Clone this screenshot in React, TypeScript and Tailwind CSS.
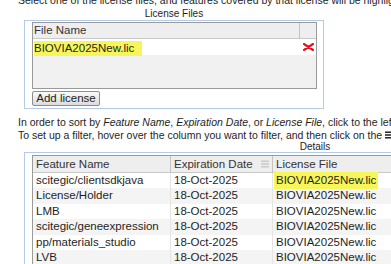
import React from "react";

const rows = [
  "scitegic/clientsdkjava",
  "License/Holder",
  "LMB",
  "scitegic/geneexpression",
  "pp/materials_studio",
  "LVB",
];

function MenuIcon({ className }: { className?: string }) {
  return (
    <svg width="8" height="8" viewBox="0 0 8 8" className={className}>
      <rect x="0" y="0.5" width="8" height="1.4" fill="currentColor" />
      <rect x="0" y="3.3" width="8" height="1.4" fill="currentColor" />
      <rect x="0" y="6.1" width="8" height="1.4" fill="currentColor" />
    </svg>
  );
}

export default function App() {
  return (
    <div className="w-[391px] h-[264px] overflow-hidden bg-white text-[#1e1e1e] font-['Liberation_Sans',Arial,sans-serif]">
      {/* Top instructions (clipped) */}
      <div className="-mt-[6px] pl-[18px] whitespace-nowrap text-[10.5px] leading-[13px]">
        Select one of the license files, and features covered by that license will be highlighted
      </div>
      <div className="ml-[24px] w-[300px] text-center text-[10px] leading-[12px] mt-[1px]">License Files</div>

      {/* License files panel */}
      <div className="ml-[24px] w-[300px] h-[89px] border border-[#b3cbe6] bg-white pl-[7px] pt-[1px]">
        <div className="w-[285px] h-[67px] border border-[#9a9a9a] bg-[#f1f1f1] flex flex-col">
          <div className="h-[16px] flex bg-[#eeeeee] border-b border-[#c9c9c9] text-[11.5px] leading-[15px]">
            <div className="w-[267px] pl-[1px] border-r border-[#c4c4c4] text-[#333]">File Name</div>
            <div className="flex-1" />
          </div>
          <div className="h-[16px] flex items-center bg-white">
            <div className="w-[267px] pl-[1px]">
              <span className="bg-[#f6f65a] text-[11.5px] leading-[15px] pr-[8px] inline-block">BIOVIA2025New.lic</span>
            </div>
            <div className="flex-1 flex items-center justify-center">
              <svg width="11" height="8" viewBox="0 0 11 8">
                <path d="M1 1 L10 7 M10 1 L1 7" stroke="#e3141c" strokeWidth="2.2" strokeLinecap="round" />
              </svg>
            </div>
          </div>
          <div className="flex-1" />
        </div>
        <button className="mt-[2px] w-[68px] h-[15px] border border-[#8c8c8c] rounded-[2px] bg-gradient-to-b from-[#fafafa] to-[#dcdcdc] text-[11.5px] leading-[13px] text-[#222] flex items-center justify-center">
          Add license
        </button>
      </div>

      {/* Details instructions */}
      <div className="mt-[7px] pl-[18px] whitespace-nowrap text-[10.5px] leading-[12.5px]">
        In order to sort by <i>Feature Name</i>, <i>Expiration Date</i>, or <i>License File</i>, click to the left of the
      </div>
      <div className="pl-[18px] whitespace-nowrap text-[10.5px] leading-[12.5px] flex items-center">
        <span>To set up a filter, hover over the column you want to filter, and then click on the&nbsp;</span>
        <MenuIcon className="text-[#111] shrink-0" />
      </div>
      <div className="ml-[24px] w-[582px] text-center text-[10px] leading-[11px]">Details</div>

      {/* Details panel */}
      <div className="ml-[24px] w-[582px] border border-[#b3cbe6] border-b-0 pl-[7px] pt-[2px]">
        <div className="border-l border-t border-[#9a9a9a] text-[11.5px]">
          <div className="h-[17px] flex bg-[#eeeeee] border-b border-[#c9c9c9] text-[#333] leading-[16px]">
            <div className="w-[138px] pl-[3px] border-r border-[#c4c4c4]">Feature Name</div>
            <div className="w-[102px] pl-[3px] border-r border-[#c4c4c4] flex items-center justify-between pr-[3px]">
              <span>Expiration Date</span>
              <MenuIcon className="text-[#c8c8c8]" />
            </div>
            <div className="flex-1 pl-[3px]">License File</div>
          </div>
          {rows.map((r, i) => (
            <div key={r} className={`h-[15.4px] flex items-center ${i % 2 === 1 ? "bg-[#f4f4f4]" : "bg-white"}`}>
              <div className="w-[138px] h-full pl-[3px] border-r border-[#e4e4e4] flex items-center">{r}</div>
              <div className="w-[102px] h-full pl-[3px] border-r border-[#e4e4e4] flex items-center">18-Oct-2025</div>
              <div className="flex-1 h-full pl-[1px] flex items-center">
                <span className={i === 0 ? "bg-[#f6f65a] px-[2px]" : "px-[2px]"}>BIOVIA2025New.lic</span>
              </div>
            </div>
          ))}
        </div>
      </div>
    </div>
  );
}
